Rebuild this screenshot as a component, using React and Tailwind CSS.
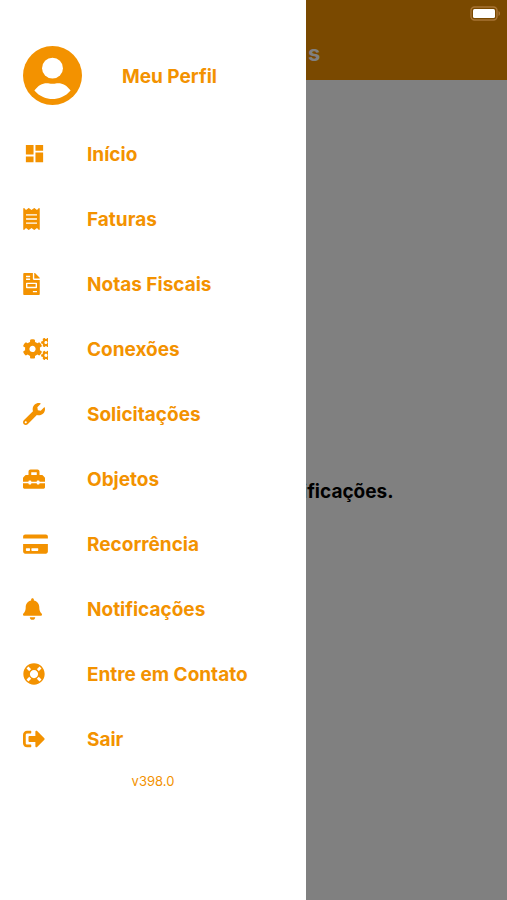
import {
  FaBell,
  FaCogs,
  FaCreditCard,
  FaFileInvoice,
  FaLifeRing,
  FaReceipt,
  FaSignOutAlt,
  FaToolbox,
  FaWrench,
} from "react-icons/fa";
import { MdDashboard } from "react-icons/md";

const items = [
  { label: "Início", Icon: MdDashboard, iconClass: "h-[23px] w-[23px]" },
  { label: "Faturas", Icon: FaReceipt, iconClass: "h-[22px] w-[17px]" },
  { label: "Notas Fiscais", Icon: FaFileInvoice, iconClass: "h-[22px] w-[17px]" },
  { label: "Conexões", Icon: FaCogs, iconClass: "h-[22px] w-[28px]" },
  { label: "Solicitações", Icon: FaWrench, iconClass: "h-[22px] w-[22px]" },
  { label: "Objetos", Icon: FaToolbox, iconClass: "h-[22px] w-[22px]" },
  { label: "Recorrência", Icon: FaCreditCard, iconClass: "h-[22px] w-[25px]" },
  { label: "Notificações", Icon: FaBell, iconClass: "h-[22px] w-[19px]" },
  { label: "Entre em Contato", Icon: FaLifeRing, iconClass: "h-[22px] w-[22px]" },
  { label: "Sair", Icon: FaSignOutAlt, iconClass: "h-[22px] w-[22px]" },
];

function Avatar() {
  return (
    <svg viewBox="2 2 20 20" className="h-[59px] w-[59px] shrink-0" aria-hidden="true">
      <circle cx="12" cy="12" r="10" fill="currentColor" />
      <circle cx="12" cy="9.5" r="3.55" fill="#fff" />
      <path
        d="M12 20c-2.03 0-4.43-.82-6.14-2.88C7 15.4 8.6 14.6 10 14.6c.8 0 1 .2 2 .2s1.2-.2 2-.2c1.4 0 3 .8 4.14 2.52C16.43 19.18 14.03 20 12 20z"
        fill="#fff"
      />
    </svg>
  );
}

function Battery() {
  return (
    <svg viewBox="0 0 31 15" className="h-[15px] w-[31px]" role="img" aria-label="Bateria">
      <rect x="1" y="1" width="26" height="13" rx="3.5" fill="none" stroke="#a87435" strokeWidth="1.4" />
      <rect x="3" y="3" width="22" height="9" rx="1.5" fill="#fff" />
      <path d="M28.5 5c2 .8 2 4.200 0 5z" fill="#a87435" />
    </svg>
  );
}

export default function App() {
  return (
    <div className="flex min-h-screen bg-white font-['Inter','Liberation_Sans',sans-serif]">
      <aside className="w-[306px] shrink-0 bg-white text-[#f39200]">
        <nav className="flex flex-col pt-[30px]" aria-label="Menu">
          <a href="#perfil" className="flex h-[91px] items-center gap-10 pl-[23px] text-[19px] leading-7 font-bold">
            <Avatar />
            <span className="pt-[3px]">Meu Perfil</span>
          </a>
          {items.map(({ label, Icon, iconClass }) => (
            <a
              key={label}
              href="#menu"
              className="flex h-[65px] items-center gap-[39px] pl-[23px] text-[19px] leading-7 font-bold"
            >
              <span className="flex w-[25px] shrink-0 overflow-hidden">
                <Icon className={`${iconClass} shrink-0`} aria-hidden="true" />
              </span>
              <span className="pt-[3px]">{label}</span>
            </a>
          ))}
        </nav>
        <p className="text-center text-[13px] leading-5">v398.0</p>
      </aside>

      <div className="flex min-w-0 flex-1 flex-col overflow-hidden">
        <header className="flex h-20 flex-col justify-between bg-[#7a4900] pt-[6px] pb-[11px]">
          <div className="flex justify-end pr-[6px]">
            <Battery />
          </div>
          <h1 className="pl-0.5 text-[22px] leading-8 font-bold text-[#808080]">s</h1>
        </header>
        <main className="flex flex-1 items-center bg-[#808080]">
          <p className="-ml-1 pt-[3px] text-[19px] leading-7 font-bold whitespace-nowrap text-black">
            ificações.
          </p>
        </main>
      </div>
    </div>
  );
}
